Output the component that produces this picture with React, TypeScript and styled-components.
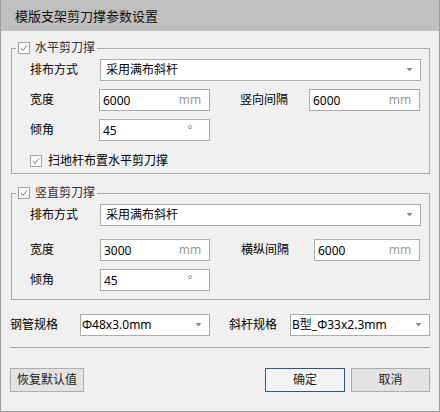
import * as React from 'react';
import styled, { createGlobalStyle } from 'styled-components';

const GlobalStyle = createGlobalStyle`
  html, body {
    margin: 0;
    padding: 0;
    background: #ffffff;
  }
  body {
    font-family: "Noto Sans", "Noto Sans CJK SC", sans-serif;
  }
  * {
    box-sizing: border-box;
  }
`;

const Window = styled.div`
  width: 440px;
  height: 412px;
  background: #f0f0f0;
  border: 1px solid #9c9c9c;
  border-top: none;
  display: flex;
  flex-direction: column;
  font-size: 12px;
  color: #000;
`;

const TitleBar = styled.div`
  height: 31px;
  flex: none;
  background: #bfbfbf;
  display: flex;
  align-items: center;
  padding-left: 14px;
  font-size: 13px;
  color: #111;
`;

const Body = styled.div`
  flex: 1;
  display: flex;
  flex-direction: column;
  padding: 10px 9px 0 9px;
`;

const Group = styled.fieldset<{ $mt?: number }>`
  margin: ${(p) => p.$mt ?? 0}px 0 0 1px;
  padding: 0;
  border: 1px solid #ababab;
  min-width: 0;
`;

const Legend = styled.legend`
  margin-left: 4px;
  padding: 0 2px;
  height: 14px;
`;

const LegendInner = styled.span`
  display: flex;
  align-items: center;
  gap: 5px;
  height: 14px;
  line-height: 14px;
  color: #333;
`;

const GroupContent = styled.div<{ $pb: number }>`
  display: flex;
  flex-direction: column;
  padding: 4px 8px ${(p) => p.$pb}px 18px;
`;

const Row = styled.div<{ $mt?: number; $h?: number }>`
  display: flex;
  align-items: center;
  height: ${(p) => p.$h ?? 22}px;
  margin-top: ${(p) => p.$mt ?? 0}px;
  flex: none;
`;

const Label = styled.span<{ $w: number; $ml?: number }>`
  width: ${(p) => p.$w}px;
  margin-left: ${(p) => p.$ml ?? 0}px;
  flex: none;
  white-space: nowrap;
  line-height: 16px;
`;

const Field = styled.div<{ $w: number }>`
  width: ${(p) => p.$w}px;
  height: 22px;
  flex: none;
  border: 1px solid #ababab;
  background: #ffffff;
  display: flex;
  align-items: center;
`;

const ValueInput = styled.input`
  flex: 1;
  min-width: 0;
  border: none;
  outline: none;
  background: transparent;
  padding: 0 0 0 3px;
  font: inherit;
  font-size: 12px;
  color: #000;
  height: 20px;
`;

const Unit = styled.span`
  width: 24px;
  margin-right: 7px;
  text-align: center;
  color: #9a9a9a;
  line-height: 16px;
`;

const SelectText = styled.span<{ $pl: number }>`
  flex: 1;
  padding-left: ${(p) => p.$pl}px;
  white-space: nowrap;
  overflow: hidden;
  line-height: 16px;
`;

const Arrow = styled.svg`
  width: 5px;
  height: 4px;
  margin-right: 8px;
  flex: none;
`;

const Box = styled.span`
  width: 12px;
  height: 12px;
  flex: none;
  border: 1px solid #a3a3a3;
  background: #fbfbfb;
  display: flex;
  align-items: center;
  justify-content: center;
`;

const CheckText = styled.span`
  margin-left: 6px;
  line-height: 16px;
`;

const Separator = styled.div`
  height: 1px;
  background: #a5a5a5;
  margin-top: 11px;
  flex: none;
`;

const ButtonBar = styled.div`
  display: flex;
  align-items: center;
  gap: 6px;
  margin-top: 20px;
`;

const Spacer = styled.div`
  flex: 1;
`;

const Button = styled.button<{ $w: number; $primary?: boolean }>`
  width: ${(p) => p.$w}px;
  height: 24px;
  padding: 0;
  font: inherit;
  font-size: 12px;
  color: #222;
  background: ${(p) => (p.$primary ? '#f4f4f4' : '#e3e3e3')};
  border: 1px solid ${(p) => (p.$primary ? '#2b5797' : '#adadad')};
  line-height: 16px;
`;

const Check = () => (
  <Box>
    <svg width="10" height="10" viewBox="0 0 10 10">
      <polyline points="1.8,5 4,7.4 8.2,2.4" fill="none" stroke="#7a7a7a" strokeWidth="1" />
    </svg>
  </Box>
);

const Select = ({ w, value, pl }: { w: number; value: string; pl: number }) => (
  <Field $w={w}>
    <SelectText $pl={pl}>{value}</SelectText>
    <Arrow viewBox="0 0 5 4">
      <rect x="0" y="0" width="5" height="1" fill="#8a8a8a" />
      <polygon points="0.5,1 4.5,1 2.5,3.6" fill="#8a8a8a" />
    </Arrow>
  </Field>
);

const NumField = ({ w, value, unit }: { w: number; value: string; unit: string }) => (
  <Field $w={w}>
    <ValueInput defaultValue={value} />
    <Unit>{unit}</Unit>
  </Field>
);

export default function App() {
  return (
    <>
      <GlobalStyle />
      <Window>
        <TitleBar>模版支架剪刀撑参数设置</TitleBar>
        <Body>
          <Group>
            <Legend>
              <LegendInner>
                <Check />
                水平剪刀撑
              </LegendInner>
            </Legend>
            <GroupContent $pb={4}>
              <Row>
                <Label $w={70}>排布方式</Label>
                <Select w={321} value="采用满布斜杆" pl={5} />
              </Row>
              <Row $mt={8}>
                <Label $w={69}>宽度</Label>
                <NumField w={111} value="6000" unit="mm" />
                <Label $w={69} $ml={30}>竖向间隔</Label>
                <NumField w={111} value="6000" unit="mm" />
              </Row>
              <Row $mt={8}>
                <Label $w={69}>倾角</Label>
                <NumField w={111} value="45" unit="°" />
              </Row>
              <Row $mt={12} $h={16}>
                <Check />
                <CheckText>扫地杆布置水平剪刀撑</CheckText>
              </Row>
            </GroupContent>
          </Group>

          <Group $mt={12}>
            <Legend>
              <LegendInner>
                <Check />
                竖直剪刀撑
              </LegendInner>
            </Legend>
            <GroupContent $pb={8}>
              <Row>
                <Label $w={70}>排布方式</Label>
                <Select w={321} value="采用满布斜杆" pl={5} />
              </Row>
              <Row $mt={13}>
                <Label $w={70}>宽度</Label>
                <NumField w={110} value="3000" unit="mm" />
                <Label $w={73} $ml={31}>横纵间隔</Label>
                <NumField w={106} value="6000" unit="mm" />
              </Row>
              <Row $mt={8}>
                <Label $w={70}>倾角</Label>
                <NumField w={110} value="45" unit="°" />
              </Row>
            </GroupContent>
          </Group>

          <Row $mt={14}>
            <Label $w={70}>钢管规格</Label>
            <Select w={130} value="Φ48x3.0mm" pl={1} />
            <Label $w={61} $ml={19}>斜杆规格</Label>
            <Select w={140} value="B型_Φ33x2.3mm" pl={1} />
          </Row>

          <Separator />

          <ButtonBar>
            <Button $w={74}>恢复默认值</Button>
            <Spacer />
            <Button $w={80} $primary>确定</Button>
            <Button $w={79}>取消</Button>
          </ButtonBar>
        </Body>
      </Window>
    </>
  );
}
